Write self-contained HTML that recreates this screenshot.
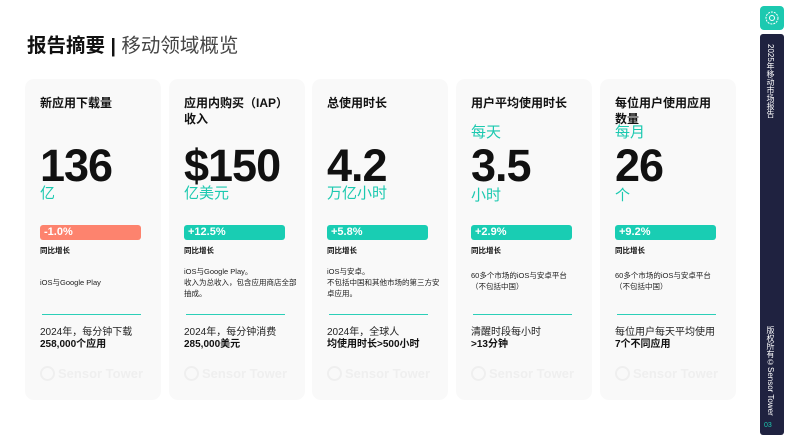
<!DOCTYPE html>
<html><head><meta charset="utf-8"><style>
*{margin:0;padding:0;box-sizing:border-box}
body{width:793px;height:444px;background:#fff;position:relative;overflow:hidden;font-family:"Liberation Sans","Noto Sans CJK SC",sans-serif;color:#111}
.t{position:absolute;left:27px;top:29px;font-size:19.5px;white-space:nowrap}
.t b{font-weight:700}
.t span{color:#444;font-weight:400}
.card{position:absolute;top:79px;width:136px;height:321px;background:#f9f9f9;border-radius:9px}
.h{position:absolute;left:15px;top:16px;font-size:12px;font-weight:700;line-height:16px;width:106px}
.pre{position:absolute;left:15px;top:45px;font-size:15px;color:#1cc9b0;line-height:18px}
.n{position:absolute;left:15px;top:63px;font-size:45px;font-weight:700;line-height:48px;letter-spacing:-1px}
.u{position:absolute;left:15px;top:106px;font-size:15px;color:#1cc9b0;line-height:18px}
.b{position:absolute;left:15px;top:146px;width:101px;height:15px;border-radius:3px;background:#19cdb3;color:#fff;font-size:11px;font-weight:700;line-height:15px;padding-left:4px}
.b.r{background:#fd836e}
.g{position:absolute;left:15px;top:166px;font-size:7.5px;font-weight:700}
.d{position:absolute;left:15px;font-size:7.5px;line-height:11px;color:#222;width:116px}
.l{position:absolute;left:17px;top:235px;width:99px;height:1px;background:#2ccfb8}
.s{position:absolute;left:15px;top:248px;font-size:10px;line-height:12px;color:#222}
.s b{color:#111}
.w{position:absolute;left:15px;top:287px;font-size:13px;font-weight:700;color:#efefef;white-space:nowrap}
.w i{display:inline-block;width:15px;height:15px;border:2px solid #efefef;border-radius:50%;vertical-align:-3px;margin-right:3px}
.side{position:absolute;left:760px;top:34px;width:24px;height:401px;background:#1f2240;border-radius:3px}
.sq{position:absolute;left:760px;top:6px;width:24px;height:24px;background:#1cc9b0;border-radius:4px}
.vt{position:absolute;left:5px;writing-mode:vertical-rl;font-size:8px;color:#fff;white-space:nowrap}
</style></head><body>
<div class="t"><b>报告摘要</b> <b>|</b> <span>移动领域概览</span></div>

<div class="card" style="left:25px">
<div class="h">新应用下载量</div>
<div class="n">136</div><div class="u">亿</div>
<div class="b r">-1.0%</div><div class="g">同比增长</div>
<div class="d" style="top:198px">iOS与Google Play</div>
<div class="l"></div>
<div class="s">2024年，每分钟下载<br><b>258,000个应用</b></div>
<div class="w"><i></i>Sensor Tower</div>
</div>

<div class="card" style="left:169px">
<div class="h">应用内购买（IAP）收入</div>
<div class="n">$150</div><div class="u">亿美元</div>
<div class="b">+12.5%</div><div class="g">同比增长</div>
<div class="d" style="top:187px">iOS与Google Play。<br>收入为总收入，包含应用商店全部抽成。</div>
<div class="l"></div>
<div class="s">2024年，每分钟消费<br><b>285,000美元</b></div>
<div class="w"><i></i>Sensor Tower</div>
</div>

<div class="card" style="left:312px">
<div class="h">总使用时长</div>
<div class="n">4.2</div><div class="u">万亿小时</div>
<div class="b">+5.8%</div><div class="g">同比增长</div>
<div class="d" style="top:187px">iOS与安卓。<br>不包括中国和其他市场的第三方安卓应用。</div>
<div class="l"></div>
<div class="s">2024年，全球人<br><b>均使用时长&gt;500小时</b></div>
<div class="w"><i></i>Sensor Tower</div>
</div>

<div class="card" style="left:456px">
<div class="h">用户平均使用时长</div>
<div class="pre">每天</div>
<div class="n">3.5</div><div class="u" style="top:108px">小时</div>
<div class="b">+2.9%</div><div class="g">同比增长</div>
<div class="d" style="top:191px">60多个市场的iOS与安卓平台<br>（不包括中国）</div>
<div class="l"></div>
<div class="s">清醒时段每小时<br><b>&gt;13分钟</b></div>
<div class="w"><i></i>Sensor Tower</div>
</div>

<div class="card" style="left:600px">
<div class="h">每位用户使用应用数量</div>
<div class="pre">每月</div>
<div class="n">26</div><div class="u" style="top:108px">个</div>
<div class="b">+9.2%</div><div class="g">同比增长</div>
<div class="d" style="top:191px">60多个市场的iOS与安卓平台<br>（不包括中国）</div>
<div class="l"></div>
<div class="s">每位用户每天平均使用<br><b>7个不同应用</b></div>
<div class="w"><i></i>Sensor Tower</div>
</div>

<div class="sq"><svg width="24" height="24"><circle cx="12" cy="12" r="6" fill="none" stroke="#fff" stroke-width="1" stroke-dasharray="2 1"/><circle cx="12" cy="12" r="2.5" fill="none" stroke="#fff" stroke-width="1"/></svg></div>
<div class="side">
<div class="vt" style="top:10px">2025年移动市场报告</div>
<div class="vt" style="top:292px">版权所有©Sensor Tower</div>
<div style="position:absolute;left:4px;top:388px;font-size:7px;color:#1cc9b0">03</div>
</div>
</body></html>
